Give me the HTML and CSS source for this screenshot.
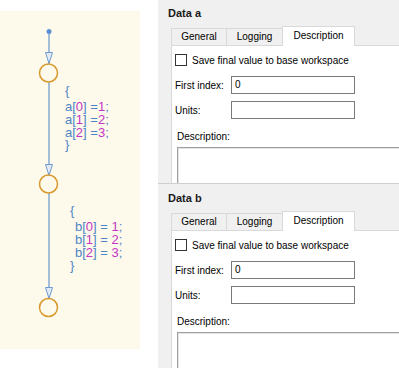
FILE: index.html
```html
<!DOCTYPE html>
<html>
<head>
<meta charset="utf-8">
<link rel="stylesheet" href="styles.css">
</head>
<body>
<div class="page">
  <div class="chart">
    <svg class="diagram" width="140" height="338" viewBox="0 11 140 338">
      <g class="wire">
        <line x1="49" y1="31" x2="49" y2="64"/>
        <line x1="49" y1="82" x2="49" y2="175"/>
        <line x1="49" y1="193" x2="49" y2="298"/>
      </g>
      <circle class="dot" cx="49" cy="31.5" r="2.5"/>
      <g class="arrow">
        <polygon points="45.5,52.5 52.5,52.5 49,63.5"/>
        <polygon points="45.5,164.5 52.5,164.5 49,175.5"/>
        <polygon points="45.5,287.5 52.5,287.5 49,298.5"/>
      </g>
      <g class="state">
        <circle cx="48.5" cy="73" r="9"/>
        <circle cx="48.5" cy="184" r="9"/>
        <circle cx="48.5" cy="307.5" r="9"/>
      </g>
      <g class="code">
        <text x="65" y="95">{</text>
        <text x="65" y="111">a[<tspan class="num">0</tspan>] =<tspan class="num">1</tspan>;</text>
        <text x="65" y="124">a[<tspan class="num">1</tspan>] =<tspan class="num">2</tspan>;</text>
        <text x="65" y="137">a[<tspan class="num">2</tspan>] =<tspan class="num">3</tspan>;</text>
        <text x="65" y="149">}</text>
        <text x="70" y="215">{</text>
        <text x="75" y="231">b[<tspan class="num">0</tspan>] = <tspan class="num">1</tspan>;</text>
        <text x="75" y="244">b[<tspan class="num">1</tspan>] = <tspan class="num">2</tspan>;</text>
        <text x="75" y="257">b[<tspan class="num">2</tspan>] = <tspan class="num">3</tspan>;</text>
        <text x="70" y="270">}</text>
      </g>
    </svg>
  </div>
  <div class="panel">
    <section class="data first">
      <h2 class="title">Data a</h2>
      <div class="tabs">
        <div class="tab t-general">General</div>
        <div class="tab t-logging">Logging</div>
        <div class="tab t-desc active">Description</div>
      </div>
      <div class="tab-body">
        <div class="check"><span class="box"></span><span>Save final value to base workspace</span></div>
        <div class="field f-first"><span class="lbl">First index:</span><div class="input">0</div></div>
        <div class="field f-units"><span class="lbl">Units:</span><div class="input"></div></div>
        <div class="desc-label">Description:</div>
        <div class="textarea"></div>
      </div>
    </section>
    <section class="data">
      <h2 class="title">Data b</h2>
      <div class="tabs">
        <div class="tab t-general">General</div>
        <div class="tab t-logging">Logging</div>
        <div class="tab t-desc active">Description</div>
      </div>
      <div class="tab-body">
        <div class="check"><span class="box"></span><span>Save final value to base workspace</span></div>
        <div class="field f-first"><span class="lbl">First index:</span><div class="input">0</div></div>
        <div class="field f-units"><span class="lbl">Units:</span><div class="input"></div></div>
        <div class="desc-label">Description:</div>
        <div class="textarea"></div>
      </div>
    </section>
  </div>
</div>
</body>
</html>
```
FILE: styles.css
```css
* { box-sizing: border-box; }
html, body { margin: 0; padding: 0; }
body {
  font-family: "Liberation Sans", Arial, sans-serif;
  font-size: 10px;
  color: #000;
  background: #fff;
}
.page {
  display: flex;
  width: 399px;
  height: 368px;
  overflow: hidden;
  background: #fff;
}
.chart {
  flex: none;
  width: 140px;
  height: 338px;
  margin-top: 11px;
  background: #fefaeb;
}
.diagram { display: block; }
.wire line { stroke: #a3bed9; stroke-width: 2; }
.dot { fill: #5b8fd3; }
.arrow polygon { fill: #e3ecf6; stroke: #6d9bd1; stroke-width: 1; }
.state circle { fill: none; stroke: #d9982c; stroke-width: 1.5; }
.code text {
  font-family: "Liberation Sans", Arial, sans-serif;
  font-size: 13px;
  fill: #4d84c6;
}
.code .num { fill: #c335c3; }

.panel {
  flex: none;
  width: 241px;
  height: 368px;
  margin-left: 18px;
  background: #f0f0f0;
  overflow: hidden;
  display: flex;
  flex-direction: column;
}
.data {
  flex: none;
  height: 185px;
  border-bottom: 1px solid #cfcfcf;
  overflow: hidden;
}
.data.first { margin-top: -1px; }
.title {
  margin: 0;
  padding: 8px 0 0 10px;
  font-size: 11px;
  font-weight: bold;
  line-height: 13px;
  color: #1a1a1a;
}
.tabs {
  display: flex;
  align-items: flex-end;
  height: 19px;
  margin: 6px 0 0 13px;
  position: relative;
  z-index: 1;
}
.tab {
  height: 17px;
  border: 1px solid #d9d9d9;
  border-bottom: none;
  background: #f0f0f0;
  text-align: center;
  line-height: 16px;
  color: #000;
  margin-right: -1px;
}
.t-general { width: 56px; }
.t-logging { width: 57px; }
.t-desc { width: 73px; }
.tab.active {
  height: 20px;
  margin-bottom: -1px;
  background: #fff;
  line-height: 18px;
}
.tab-body {
  width: 260px;
  height: 200px;
  margin-left: 13px;
  background: #fff;
  border-top: 1px solid #d9d9d9;
  border-left: 1px solid #d9d9d9;
  padding: 8px 0 0 3px;
}
.check {
  display: flex;
  align-items: center;
  gap: 5px;
  height: 12px;
}
.box {
  width: 12px;
  height: 12px;
  border: 1px solid #333;
  background: #fff;
}
.field {
  display: flex;
  align-items: center;
  height: 18px;
}
.f-first { margin-top: 10px; }
.f-units { margin-top: 7px; }
.lbl { width: 56px; }
.input {
  width: 124px;
  height: 18px;
  border: 1px solid #7a7a7a;
  background: #fff;
  padding-left: 3px;
  line-height: 16px;
}
.desc-label {
  margin: 12px 0 0 2px;
  line-height: 12px;
}
.textarea {
  margin: 4px 0 0 2px;
  width: 240px;
  height: 60px;
  border: 1px solid #a0a0a0;
  box-shadow: inset 1px 1px 0 #e3e3e3;
  background: #fff;
}
```
